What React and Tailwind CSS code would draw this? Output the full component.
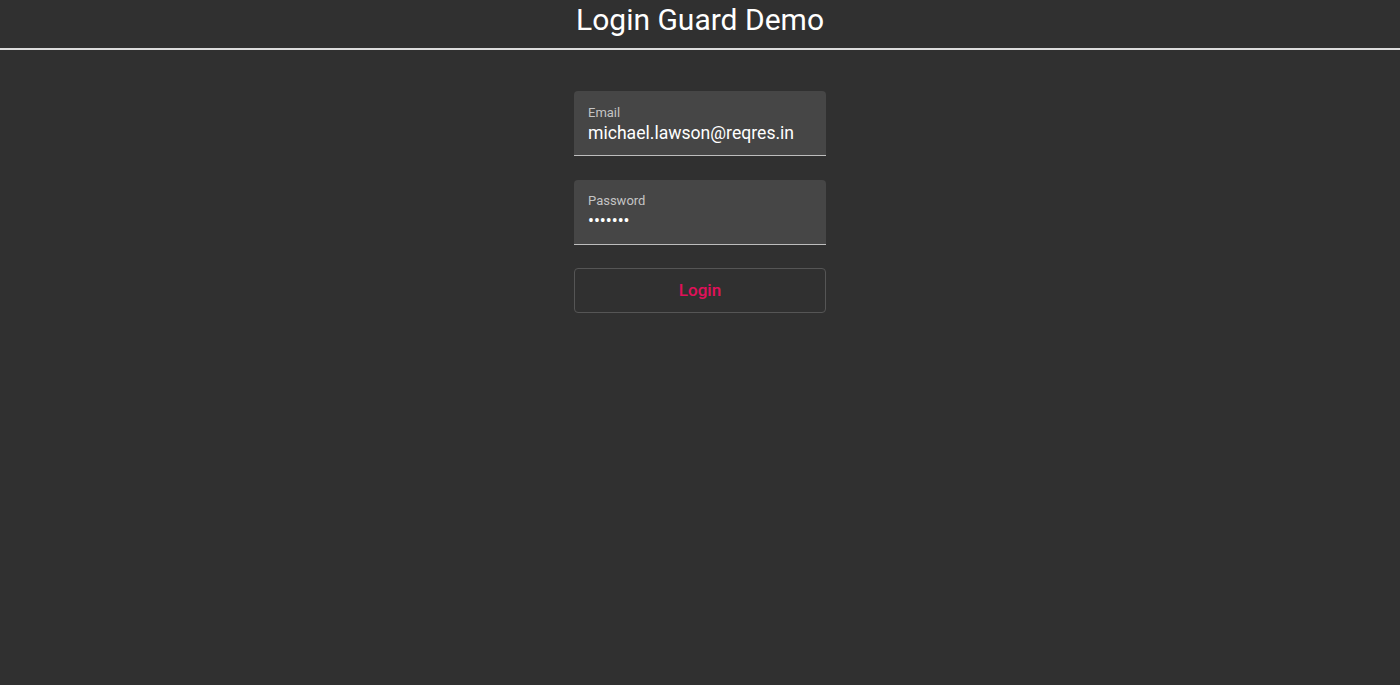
export default function App() {
  return (
    <div className="min-h-[685px] bg-[#303030] font-['Roboto','Liberation_Sans',sans-serif] text-white">
      <header className="h-[50px] flex items-start justify-center border-b-2 border-[#dcdcdc]">
        <h1 className="text-[30px] leading-[40px] font-normal">Login Guard Demo</h1>
      </header>

      <form className="w-[252px] mx-auto pt-[41px] flex flex-col">
        <div className="h-[65px] bg-[#464646] rounded-t-[4px] border-b border-[#bdbdbd] px-[14px] pt-[15px]">
          <label className="block text-[13px] leading-[14px] text-[#c4c4c4]">Email</label>
          <input
            type="email"
            defaultValue="michael.lawson@reqres.in"
            className="w-full bg-transparent outline-none text-[17.6px] leading-[24px] mt-[1px] text-white"
          />
        </div>

        <div className="h-[65px] mt-[24px] bg-[#464646] rounded-t-[4px] border-b border-[#bdbdbd] px-[14px] pt-[14px]">
          <label className="block text-[13px] leading-[14px] text-[#c4c4c4]">Password</label>
          <input
            type="password"
            defaultValue="1234567"
            className="w-full bg-transparent outline-none text-[17.6px] leading-[24px] mt-[1px] text-white"
          />
        </div>

        <button
          type="button"
          className="mt-[23px] h-[45px] rounded-[4px] border border-[#555555] text-[#e0105a] text-[17px] font-medium"
        >
          Login
        </button>
      </form>
    </div>
  );
}
